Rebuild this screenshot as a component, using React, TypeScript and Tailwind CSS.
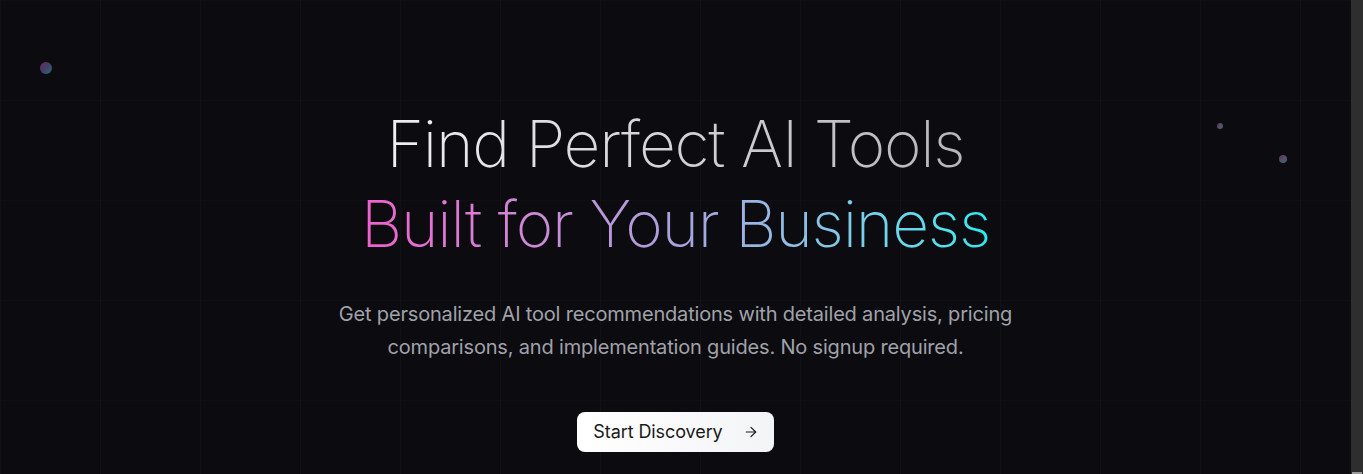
import React from "react";
import { ArrowRight } from "lucide-react";

export default function App() {
  return (
    <div className="flex h-[474px] w-full overflow-hidden bg-[#0c0b10]" style={{ fontFamily: "Inter, 'Noto Sans', sans-serif" }}>
      <main className="relative flex-1 overflow-hidden bg-[linear-gradient(to_right,rgba(255,255,255,0.018)_1px,transparent_1px),linear-gradient(to_bottom,rgba(255,255,255,0.012)_1px,transparent_1px)] bg-[size:100px_100px]">
        <span className="absolute left-[40px] top-[62px] h-3 w-3 rounded-full bg-gradient-to-br from-[#6a2358] via-[#40406a] to-[#126f72]" />
        <span className="absolute left-[1217px] top-[123px] h-[6px] w-[6px] rounded-full bg-gradient-to-br from-[#6a2358] to-[#126f72]" />
        <span className="absolute left-[1279px] top-[155px] h-2 w-2 rounded-full bg-gradient-to-br from-[#6a2358] to-[#126f72]" />

        <section className="relative flex flex-col items-center pt-[104px] text-center">
          <h1 className="text-[64px] font-extralight leading-[80px] tracking-[-0.019em]">
            <span className="block bg-gradient-to-r from-[#f2f2f2] to-[#b4b4b8] bg-clip-text text-transparent">Find Perfect AI Tools</span>
            <span className="block bg-gradient-to-r from-[#f25fcf] via-[#a8a2dc] to-[#20ecf2] bg-clip-text text-transparent">Built for Your Business</span>
          </h1>
          <p className="mt-[34px] max-w-3xl text-xl leading-relaxed tracking-[-0.009em] text-[#a0a2aa]">
            Get personalized AI tool recommendations with detailed analysis, pricing comparisons, and implementation guides. No signup required.
          </p>
          <button className="mt-[49px] flex h-10 items-center gap-5 rounded-lg bg-gradient-to-r from-white to-gray-100 pl-4 pr-[15px] text-lg tracking-[-0.005em] text-[#1a1a1a]">
            <span>Start Discovery</span>
            <ArrowRight size={16} strokeWidth={1.75} />
          </button>
        </section>
      </main>
      <aside className="flex w-3 flex-col justify-end bg-[#2e2e2e]">
        <div className="mx-auto h-[2px] w-[10px] bg-[#9a9a9a]" />
      </aside>
    </div>
  );
}
